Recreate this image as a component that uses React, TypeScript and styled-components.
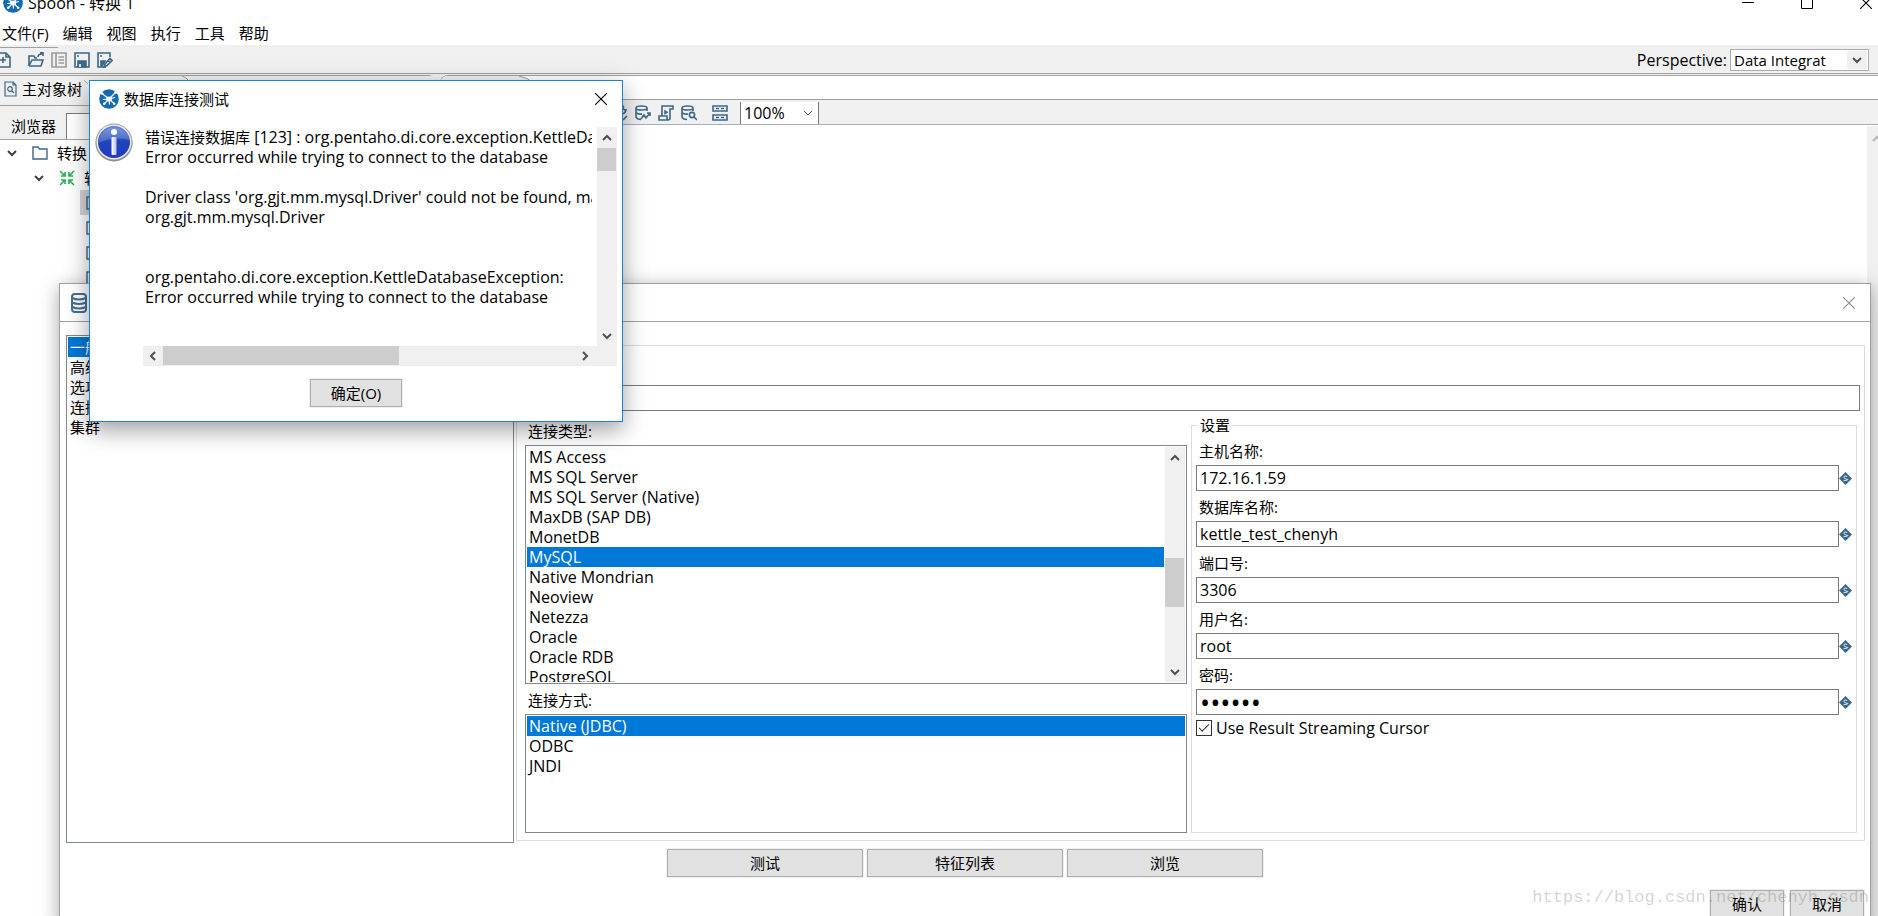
import React from "react";
import styled, { createGlobalStyle, css } from "styled-components";

const ICON = "#3d6788";
const SELECT = "#0078d7";

const Global = createGlobalStyle`
  *, *::before, *::after { box-sizing: border-box; }
  html, body { margin: 0; height: 100%; overflow: hidden; }
  body, button, input, select {
    font-family: "Open Sans", "Noto Sans CJK SC", sans-serif;
    font-size: 15px;
    line-height: 20px;
    color: #000;
  }
  ul { list-style: none; margin: 0; padding: 0; }
  svg { display: block; flex: none; }
`;

/* ---------- main window ---------- */

const Desktop = styled.div`
  position: relative;
  display: flex;
  flex-direction: column;
  height: 100vh;
  overflow: hidden;
  background: #fff;
`;

const TitleBar = styled.header`
  display: flex;
  align-items: flex-start;
  justify-content: space-between;
  height: 23px;
`;

const AppTitle = styled.h1`
  display: flex;
  align-items: center;
  gap: 5px;
  margin: -7px 0 0 3px;
  height: 20px;
  font-size: 16px;
  font-weight: 400;
`;

const WindowControls = styled.div`
  display: flex;
  gap: 47px;
  margin: -3px 6px 0 0;
`;

const PlainButton = styled.button`
  display: flex;
  align-items: center;
  justify-content: center;
  flex: none;
  padding: 0;
  border: 0;
  background: none;
`;

const MenuBar = styled.nav`
  display: flex;
  gap: 14px;
  height: 22px;
  padding: 0 0 2px 2px;
`;

const Toolbar = styled.div`
  display: flex;
  align-items: center;
  justify-content: space-between;
  height: 29px;
  padding-right: 9px;
  background: #f0f0f0;
  border-bottom: 1px solid #a0a0a0;
`;

const ToolGroup = styled.div`
  display: flex;
  align-items: center;
  gap: 7px;
  height: 28px;
  margin-left: -5px;
  padding-top: 2px;
  background: linear-gradient(#a0a0a0, #a0a0a0) 0 2px / 63px 1px no-repeat;
  & > :first-child { margin-right: 10px; }
`;

const Perspective = styled.label`
  display: flex;
  align-items: center;
  gap: 3px;
  padding-top: 1px;
  font-size: 16px;
`;

const PerspectiveBox = styled.span`
  display: flex;
  width: 139px;
  height: 22px;
  border: 1px solid #abadb3;
  background: #fff;
`;

const FlatSelect = styled.select`
  flex: 1;
  min-width: 0;
  height: 20px;
  padding: 0 0 0 3px;
  border: 0;
  background: none;
  appearance: none;
`;

const DropCell = styled.span`
  display: flex;
  align-items: center;
  justify-content: center;
  width: 20px;
  margin: 1px;
  background: #f0f0f0;
`;

const Workspace = styled.main`
  display: flex;
  flex: 1;
  min-height: 0;
  gap: 4px;
  padding-top: 1px;
  background: #f0f0f0;
`;

const SidePanel = styled.aside`
  display: flex;
  flex-direction: column;
  width: 436px;
  border-top: 1px solid #a0a0a0;
  border-right: 1px solid #a0a0a0;
  border-top-right-radius: 8px;
  background: #fff;
`;

const SideTabs = styled.div`
  display: flex;
  height: 30px;
  background: #f0f0f0;
  border-bottom: 1px solid #a0a0a0;
`;

const SideTab = styled.div`
  display: flex;
  align-items: center;
  gap: 5px;
  height: 26px;
  padding-left: 4px;
  width: 84px;
`;

const FilterRow = styled.label`
  display: flex;
  align-items: center;
  gap: 10px;
  height: 34px;
  padding: 7px 4px 0 11px;
  background: #f0f0f0;
  border-bottom: 1px solid #a0a0a0;
`;

const FilterInput = styled.input`
  flex: 1;
  min-width: 0;
  height: 26px;
  border: 1px solid #7a7a7a;
  border-bottom: 0;
`;

const TreeRow = styled.li<{ $depth: number; $selected?: boolean }>`
  display: flex;
  align-items: center;
  height: 25px;
  margin-left: ${(p) => (p.$depth === 2 ? 80 : 0)}px;
  padding-left: ${(p) => (p.$depth === 2 ? 6 : 6 + p.$depth * 27)}px;
  background: ${(p) => (p.$selected ? "#d4d4d4" : "none")};
  & > svg + svg { margin: 0 9px 0 14px; }
`;

const Editor = styled.section`
  display: flex;
  flex-direction: column;
  flex: 1;
  min-width: 0;
  border-top: 1px solid #a0a0a0;
  border-left: 1px solid #a0a0a0;
  border-top-left-radius: 8px;
  background: #fff;
`;

const EditorTabs = styled.div`
  height: 24px;
  border-bottom: 1px solid #a0a0a0;
`;

const EditorToolbar = styled.div`
  display: flex;
  align-items: center;
  gap: 7px;
  height: 25px;
  padding: 2px 0 0 171px;
  background: #f0f0f0;
  border-bottom: 1px solid #abadb3;
`;

const ZoomBox = styled.span`
  display: flex;
  align-items: center;
  width: 79px;
  height: 22px;
  margin-left: 5px;
  padding-right: 4px;
  border-left: 1px solid #7a7a7a;
  border-right: 1px solid #7a7a7a;
  background: #fff;
  & > ${FlatSelect} { font-size: 16px; }
`;

const Canvas = styled.div`
  display: flex;
  justify-content: flex-end;
  flex: 1;
  padding-top: 1px;
`;

const CanvasScroll = styled.div`
  width: 11px;
  padding: 7px 0 0 4px;
  overflow: hidden;
  background: #f0f0f0;
`;

/* ---------- shared parts ---------- */

const Track = styled.div<{ $horizontal?: boolean }>`
  display: flex;
  flex: none;
  background: #f0f0f0;
  ${(p) =>
    p.$horizontal
      ? css`height: 20px; padding-right: 2px;`
      : css`flex-direction: column; width: 20px;`}
`;

const TrackEnd = styled(PlainButton)<{ $horizontal?: boolean }>`
  width: 19px;
  height: 21px;
  ${(p) => p.$horizontal && css`width: 20px; height: 20px;`}
`;

const TrackLane = styled.div<{ $horizontal?: boolean }>`
  display: flex;
  flex: 1;
  flex-direction: ${(p) => (p.$horizontal ? "row" : "column")};
`;

const Thumb = styled.div<{ $horizontal?: boolean; $start: number; $size: number }>`
  background: #cdcdcd;
  ${(p) =>
    p.$horizontal
      ? css`width: ${p.$size}px; height: 19px; margin-left: ${p.$start}px;`
      : css`height: ${p.$size}px; width: 19px; margin-top: ${p.$start}px;`}
`;

const PushButton = styled.button<{ $width: number }>`
  flex: none;
  width: ${(p) => p.$width}px;
  height: 28px;
  padding: 0;
  border: 1px solid #adadad;
  background: #e1e1e1;
  box-shadow: 0 0 0 1px #f0f0f0;
`;

const ListBox = styled.ul`
  flex: 1;
  min-width: 0;
  padding: 1px;
  overflow: hidden;
  background: #fff;
`;

const Option = styled.li<{ $selected?: boolean }>`
  height: 20px;
  padding-left: 2px;
  white-space: nowrap;
  color: ${(p) => (p.$selected ? "#fff" : "#000")};
  background: ${(p) => (p.$selected ? SELECT : "none")};
`;

const ListFrame = styled.div<{ $height: number }>`
  display: flex;
  height: ${(p) => p.$height}px;
  padding-bottom: 1px;
  border: 1px solid #828790;
  background: #fff;
  & > ${Track} { margin: 1px 1px 0 0; }
`;

const TextBox = styled.input`
  flex: 1;
  min-width: 0;
  width: 100%;
  height: 26px;
  padding: 0 3px;
  border: 1px solid #7a7a7a;
  background: #fff;
  font-size: 16px;
  outline: 0;
  &[type="password"] { font-size: 27px; }
`;

/* ---------- database connection window ---------- */

const DatabaseWindow = styled.section`
  position: absolute;
  top: 283px;
  left: 59px;
  right: 7px;
  border: 1px solid #a0a0a0;
  background: #fff;
  box-shadow: 0 4px 18px rgba(0, 0, 0, 0.35);
`;

const DatabaseTitle = styled.header`
  display: flex;
  align-items: center;
  justify-content: space-between;
  height: 38px;
  padding: 0 15px 0 11px;
  border-bottom: 1px solid #a0a0a0;
`;

const DatabaseBody = styled.div`
  display: flex;
  gap: 2px;
  padding: 13px 5px 6px 6px;
`;

const Sections = styled.div`
  width: 448px;
  flex: none;
`;

const General = styled.div`
  flex: 1;
  min-width: 0;
  margin: 10px 0 2px;
  padding: 10px 4px 7px 8px;
  border: 1px solid #dcdcdc;
`;

const FieldLabel = styled.label`
  display: block;
  height: 20px;
  padding-left: 3px;
`;

const NameField = styled.div`
  display: grid;
  gap: 9px;
`;

const Columns = styled.div`
  display: grid;
  grid-template-columns: 331fr 333fr;
  gap: 4px;
  padding-right: 3px;
`;

const Choices = styled.div`
  display: grid;
  gap: 4px;
  align-content: start;
  padding-top: 10px;
  font-size: 16px;
  & > ${ListFrame} + div { margin-top: 2px; }
`;

const ChoiceTitle = styled.div`
  height: 20px;
  padding-left: 3px;
  font-size: 15px;
`;

const Settings = styled.fieldset`
  min-width: 0;
  margin: 4px 0 0;
  padding: 6px 4px 0;
  border: 1px solid #dcdcdc;
`;

const Legend = styled.legend`
  height: 20px;
  margin-left: 2px;
  padding: 0 2px;
`;

const SettingField = styled.div`
  display: grid;
  gap: 4px;
  margin-bottom: 6px;
`;

const VariableInput = styled.div`
  display: flex;
  align-items: center;
`;

const CheckLabel = styled.label`
  display: flex;
  align-items: center;
  gap: 4px;
  margin-top: -3px;
  font-size: 16px;
`;

const CheckBox = styled.input`
  display: grid;
  place-items: center;
  width: 16px;
  height: 16px;
  margin: 0;
  border: 1px solid #333;
  background: #fff;
  appearance: none;
  &:checked::before {
    content: "";
    width: 10px;
    height: 5px;
    margin-top: -3px;
    border-left: 1px solid #333;
    border-bottom: 1px solid #333;
    transform: rotate(-45deg);
  }
`;

const Actions = styled.div`
  display: flex;
  justify-content: center;
  gap: 4px;
`;

const Footer = styled.footer`
  display: flex;
  justify-content: flex-end;
  gap: 6px;
  padding: 13px 6px 10px;
`;

/* ---------- message dialog ---------- */

const MessageWindow = styled.section`
  position: absolute;
  top: 80px;
  left: 89px;
  width: 534px;
  padding-bottom: 14px;
  border: 1px solid #1883d7;
  background: #fff;
  box-shadow: 0 8px 22px rgba(0, 0, 0, 0.38);
`;

const MessageTitle = styled.header`
  display: flex;
  align-items: center;
  gap: 5px;
  height: 36px;
  padding: 0 15px 0 9px;
`;

const DialogName = styled.h2`
  flex: 1;
  margin: 0;
  font-size: 15px;
  font-weight: 400;
`;

const MessageBody = styled.div`
  display: flex;
  gap: 10px;
  padding: 6px 5px 13px;
`;

const MessageScroller = styled.div`
  display: grid;
  grid-template-columns: minmax(0, 1fr) 20px;
  grid-template-rows: 219px 20px;
  flex: 1;
  min-width: 0;
  margin-top: 4px;
  background: #f0f0f0;
`;

const MessageText = styled.div`
  overflow: hidden;
  padding-left: 2px;
  border-right: 5px solid #fff;
  white-space: pre;
  background: #fff;
  font-size: 16px;
`;

const MessageLine = styled.div`
  height: 20px;
`;

const Chinese = styled.span`
  font-size: 15px;
`;

const Watermark = styled.div`
  position: absolute;
  right: 9px;
  bottom: 8px;
  font-family: "Liberation Mono", monospace;
  font-size: 17px;
  color: rgba(120, 120, 105, 0.32);
  pointer-events: none;
`;

/* ---------- drawings ---------- */

const Svg = ({ w = 16, h = 16, children, ...rest }: any) => (
  <svg width={w} height={h} viewBox={`0 0 ${w} ${h}`} fill="none" stroke={ICON} strokeWidth={1.6} {...rest}>
    {children}
  </svg>
);

const Logo = () => (
  <Svg w={20} h={20} stroke="#fff" strokeWidth={1.2}>
    <circle cx="10" cy="10" r="9.8" fill="#1569b0" stroke="none" />
    <path d="M10 10 3 4.5M10 10 17 3M10 10 5.5 14.5M10 10 15 14.5M10 10 4 10.5M10 10 10.5 15.5M10 10 16 8.5" />
    <ellipse cx="10" cy="10" rx="3" ry="2.4" fill="#fff" stroke="none" />
    <circle cx="3.2" cy="4.6" r="1.3" fill="#fff" stroke="none" />
    <circle cx="16.8" cy="3.2" r="1.5" fill="#fff" stroke="none" />
    <circle cx="5.2" cy="14.8" r="1.3" fill="#fff" stroke="none" />
    <circle cx="15.2" cy="14.8" r="1.2" fill="#fff" stroke="none" />
  </Svg>
);

const Info = () => (
  <Svg w={38} h={40} stroke="none">
    <defs>
      <linearGradient id="ball" x1="0" y1="0" x2="0" y2="1">
        <stop offset="0" stopColor="#5f86dc" />
        <stop offset="0.5" stopColor="#1f45b8" />
        <stop offset="1" stopColor="#2238c8" />
      </linearGradient>
      <linearGradient id="stem" x1="0" y1="0" x2="1" y2="0">
        <stop offset="0" stopColor="#fff" />
        <stop offset="1" stopColor="#b9c2dc" />
      </linearGradient>
    </defs>
    <circle cx="19" cy="20" r="18.5" fill="#8a8a8a" />
    <circle cx="19" cy="19" r="18.5" fill="#9c9c9c" />
    <circle cx="19" cy="19" r="17.5" fill="#e8e8e8" />
    <circle cx="19" cy="19" r="16" fill="url(#ball)" />
    <path d="M3.2 20A16 16 0 0 1 34.8 17Q19 13 3.2 20Z" fill="#fff" opacity="0.18" />
    <circle cx="19" cy="9" r="3" fill="#fff" />
    <rect x="16.5" y="14" width="5" height="18" rx="1" fill="url(#stem)" />
  </Svg>
);

const paths: Record<string, string> = {
  up: "M2 8 6 4 10 8",
  down: "M2 4 6 8 10 4",
  left: "M8 2 4 6 8 10",
  right: "M4 2 8 6 4 10",
};

const Arrow = ({ dir, color = "#505050", width = 2 }: { dir: string; color?: string; width?: number }) => (
  <Svg w={12} h={12} stroke={color} strokeWidth={width}>
    <path d={paths[dir]} />
  </Svg>
);

const Cross = ({ color = "#000" }: { color?: string }) => (
  <Svg w={12} h={12} stroke={color} strokeWidth={1.1}>
    <path d="M0 0 12 12M12 0 0 12" />
  </Svg>
);

const NewFile = () => (
  <Svg><path d="M1 1H11L15 5V15H1ZM11 1V5H15M8 5V11M5 8H11" /></Svg>
);
const OpenFile = () => (
  <Svg><path d="M1 14V4H6L7 6H9M1 14H13L15 8H4L1 14M10 5Q10 2 14 2M12 0.8H15V4" /></Svg>
);
const ListDoc = () => (
  <Svg stroke="#9a9a9a"><path d="M1 1H15V15H1ZM5 1V15M7.5 5H13M7.5 8H13M7.5 11H13" /></Svg>
);
const Save = () => (
  <Svg><path d="M1 1H15V15H1Z" /><path d="M4 9H12V15H4Z" fill={ICON} /><path d="M6 12V15" stroke="#fff" /><path d="M3 4H5" /></Svg>
);
const SaveAs = () => (
  <Svg><path d="M9 15H1V1H13V5" /><path d="M4 9H8L5 14H4Z" fill={ICON} /><path d="M3 4H5M7 15 8 12 13 6.5 15 8.5 10 13.5ZM11 8.5 13 10.5" /></Svg>
);
const PageSearch = () => (
  <Svg w={13} h={16} strokeWidth={1.2}>
    <path d="M1 1H9L12 4V15H1ZM9 1V4H12" /><circle cx="6" cy="8" r="2.3" /><path d="M8 10 10 12" />
  </Svg>
);
const Folder = () => (
  <Svg strokeWidth={1.4}><path d="M1 14V2H6L7.5 4H15V14Z" /></Svg>
);
const Transform = () => (
  <Svg stroke="#22b14c">
    <path d="M1 1 6 6M6 2V6H2M15 1 10 6M10 2V6H14M1 15 6 10M2 10H6V14M15 15 10 10M14 10H10V14" />
  </Svg>
);
const Database = () => (
  <Svg w={16} h={20} stroke="#456f92" strokeWidth={2}>
    <path d="M1 4Q1 1 4 1H12Q15 1 15 4V16Q15 19 12 19H4Q1 19 1 16ZM1 5Q8 8 15 5M1 9.5Q8 12.5 15 9.5M1 14Q8 17 15 14" />
  </Svg>
);
const Check = () => (
  <Svg><path d="M12 1Q9 3 14 6M10 9Q14 8 14 4M11 15 15 11" /></Svg>
);
const Cylinder = "M1 3Q1 1 6.5 1T12 3 6.5 5 1 3V12Q2 14.5 6 14.5M1 7.5Q3 9.5 7 9M12 3V6";
const DbImpact = () => (
  <Svg><path d={Cylinder} /><path d="M6 14 9 10 11 13 15 8M12 8H15V11" /></Svg>
);
const Script = () => (
  <Svg>
    <path d="M4 11V1H15V4H12V13Q12 15 10 15H1V11H9V15" /><path d="M6.5 5V9.5L10 7.2Z" fill={ICON} strokeWidth={0.5} />
  </Svg>
);
const DbSearch = () => (
  <Svg><path d={Cylinder} /><circle cx="11" cy="10" r="2.6" /><path d="M13 12 16 15" /></Svg>
);
const Results = () => (
  <Svg><path d="M1 1H15V6H1ZM1 10H15V15H1ZM4 3.5H7M9 3.5H12M4 12.5H7M9 12.5H12" /></Svg>
);
const Variable = () => (
  <Svg w={13} h={13} stroke="none">
    <path d="M6.5 0 13 6.5 6.5 13 0 6.5Z" fill={ICON} />
    <path d="M8.3 4.3Q4.8 3.2 4.9 5.1T8.1 7.4 4.6 8.8" stroke="#dce6ee" strokeWidth="1" />
  </Svg>
);

/* ---------- data ---------- */

const menus = ["文件(F)", "编辑", "视图", "执行", "工具", "帮助"];
const sections = ["一般", "高级", "选项", "连接池", "集群"];
const databases = [
  "MS Access", "MS SQL Server", "MS SQL Server (Native)", "MaxDB (SAP DB)", "MonetDB", "MySQL",
  "Native Mondrian", "Neoview", "Netezza", "Oracle", "Oracle RDB", "PostgreSQL",
];
const accessModes = ["Native (JDBC)", "ODBC", "JNDI"];
const settings = [
  { id: "host", label: "主机名称:", value: "172.16.1.59" },
  { id: "database", label: "数据库名称:", value: "kettle_test_chenyh" },
  { id: "port", label: "端口号:", value: "3306" },
  { id: "user", label: "用户名:", value: "root" },
  { id: "password", label: "密码:", value: "secret", type: "password" },
];
const message = [
  "Error occurred while trying to connect to the database",
  "",
  "Driver class 'org.gjt.mm.mysql.Driver' could not be found, make",
  "org.gjt.mm.mysql.Driver",
  "",
  "",
  "org.pentaho.di.core.exception.KettleDatabaseException:",
  "Error occurred while trying to connect to the database",
];

const Scrollbar = ({ horizontal, start, size }: { horizontal?: boolean; start: number; size: number }) => (
  <Track $horizontal={horizontal}>
    <TrackEnd $horizontal={horizontal} aria-label="Scroll back"><Arrow dir={horizontal ? "left" : "up"} /></TrackEnd>
    <TrackLane $horizontal={horizontal}>
      <Thumb $horizontal={horizontal} $start={start} $size={size} />
    </TrackLane>
    <TrackEnd $horizontal={horizontal} aria-label="Scroll forward"><Arrow dir={horizontal ? "right" : "down"} /></TrackEnd>
  </Track>
);

const List = ({ label, items, selected }: { label: string; items: string[]; selected: string }) => (
  <ListBox role="listbox" aria-label={label}>
    {items.map((item) => (
      <Option key={item} role="option" aria-selected={item === selected} $selected={item === selected}>
        {item}
      </Option>
    ))}
  </ListBox>
);

const ResultsButton = styled(PlainButton)`
  margin-left: 8px;
`;

export default function App() {
  return (
    <Desktop>
      <Global />
      <TitleBar>
        <AppTitle><Logo />Spoon - 转换 1</AppTitle>
        <WindowControls>
          <PlainButton aria-label="Minimize">
            <Svg w={12} h={12} stroke="#000" strokeWidth={1}><path d="M0 5.5H12" /></Svg>
          </PlainButton>
          <PlainButton aria-label="Maximize">
            <Svg w={12} h={12} stroke="#000" strokeWidth={1}><path d="M0.5 0.5H11.5V11.5H0.5Z" /></Svg>
          </PlainButton>
          <PlainButton aria-label="Close"><Cross /></PlainButton>
        </WindowControls>
      </TitleBar>
      <MenuBar>{menus.map((m) => <PlainButton key={m}>{m}</PlainButton>)}</MenuBar>
      <Toolbar>
        <ToolGroup>
          <PlainButton aria-label="New"><NewFile /></PlainButton>
          <PlainButton aria-label="Open"><OpenFile /></PlainButton>
          <PlainButton aria-label="Explore"><ListDoc /></PlainButton>
          <PlainButton aria-label="Save"><Save /></PlainButton>
          <PlainButton aria-label="Save as"><SaveAs /></PlainButton>
        </ToolGroup>
        <Perspective>
          Perspective:
          <PerspectiveBox>
            <FlatSelect defaultValue="di"><option value="di">Data Integrat</option></FlatSelect>
            <DropCell><Arrow dir="down" /></DropCell>
          </PerspectiveBox>
        </Perspective>
      </Toolbar>

      <Workspace>
        <SidePanel>
          <SideTabs>
            <SideTab><PageSearch />主对象树</SideTab>
            <Svg w={110} h={20} stroke="#a0a0a0" strokeWidth={1}>
              <path d="M-8 0Q-2 1 4 8M98 0Q102 1 106 6" />
            </Svg>
          </SideTabs>
          <FilterRow>浏览器<FilterInput type="text" /></FilterRow>
          <ul>
            <TreeRow $depth={0}><Arrow dir="down" color="#404040" /><Folder />转换</TreeRow>
            <TreeRow $depth={1}><Arrow dir="down" color="#404040" /><Transform />转换 1</TreeRow>
            {[0, 1, 2, 3].map((n) => (
              <TreeRow key={n} $depth={2} $selected={n === 0}><Folder /></TreeRow>
            ))}
          </ul>
        </SidePanel>
        <Editor>
          <EditorTabs>
            <Svg w={110} h={22} stroke="#a0a0a0" strokeWidth={1}>
              <path d="M0 22V4Q2 0 6 0H78Q86 1 94 8L106 22Z" fill="#f0f0f0" stroke="none" />
              <path d="M78 0Q86 1 94 8L106 22" />
            </Svg>
          </EditorTabs>
          <EditorToolbar>
            <PlainButton aria-label="Check"><Check /></PlainButton>
            <PlainButton aria-label="Impact"><DbImpact /></PlainButton>
            <PlainButton aria-label="SQL"><Script /></PlainButton>
            <PlainButton aria-label="Explore database"><DbSearch /></PlainButton>
            <ResultsButton aria-label="Show results"><Results /></ResultsButton>
            <ZoomBox>
              <FlatSelect aria-label="Zoom" defaultValue="100"><option value="100">100%</option></FlatSelect>
              <Arrow dir="down" width={1} />
            </ZoomBox>
          </EditorToolbar>
          <Canvas>
            <CanvasScroll><Arrow dir="up" color="#b8b8b8" /></CanvasScroll>
          </Canvas>
        </Editor>
      </Workspace>

      <DatabaseWindow>
        <DatabaseTitle>
          <Database />
          <PlainButton aria-label="Close"><Cross color="#8c8c8c" /></PlainButton>
        </DatabaseTitle>
        <DatabaseBody>
          <Sections>
            <ListFrame $height={508}><List label="Sections" items={sections} selected="一般" /></ListFrame>
          </Sections>
          <General>
            <NameField>
              <FieldLabel htmlFor="name">连接名称:</FieldLabel>
              <TextBox id="name" defaultValue="123" />
            </NameField>
            <Columns>
              <Choices>
                <ChoiceTitle>连接类型:</ChoiceTitle>
                <ListFrame $height={239}>
                  <List label="连接类型" items={databases} selected="MySQL" />
                  <Scrollbar start={90} size={49} />
                </ListFrame>
                <ChoiceTitle>连接方式:</ChoiceTitle>
                <ListFrame $height={119}>
                  <List label="连接方式" items={accessModes} selected="Native (JDBC)" />
                </ListFrame>
              </Choices>
              <Settings>
                <Legend>设置</Legend>
                {settings.map((s) => (
                  <SettingField key={s.id}>
                    <FieldLabel htmlFor={s.id}>{s.label}</FieldLabel>
                    <VariableInput>
                      <TextBox id={s.id} type={s.type ?? "text"} defaultValue={s.value} />
                      <Variable />
                    </VariableInput>
                  </SettingField>
                ))}
                <CheckLabel><CheckBox type="checkbox" defaultChecked />Use Result Streaming Cursor</CheckLabel>
              </Settings>
            </Columns>
          </General>
        </DatabaseBody>
        <Actions>
          <PushButton $width={196}>测试</PushButton>
          <PushButton $width={196}>特征列表</PushButton>
          <PushButton $width={196}>浏览</PushButton>
        </Actions>
        <Footer>
          <PushButton $width={74}>确认</PushButton>
          <PushButton $width={74}>取消</PushButton>
        </Footer>
      </DatabaseWindow>

      <MessageWindow role="dialog" aria-label="数据库连接测试">
        <MessageTitle>
          <Logo />
          <DialogName>数据库连接测试</DialogName>
          <PlainButton aria-label="Close"><Cross /></PlainButton>
        </MessageTitle>
        <MessageBody>
          <Info />
          <MessageScroller>
            <MessageText>
              <MessageLine>
                <Chinese>错误连接数据库</Chinese> [123] : org.pentaho.di.core.exception.KettleDatabaseException:
              </MessageLine>
              {message.map((line, i) => <MessageLine key={i}>{line}</MessageLine>)}
            </MessageText>
            <Scrollbar start={0} size={23} />
            <Scrollbar horizontal start={0} size={236} />
          </MessageScroller>
        </MessageBody>
        <Actions><PushButton $width={92}>确定(O)</PushButton></Actions>
      </MessageWindow>

      <Watermark>https://blog.csdn.net/chenyh_csdn</Watermark>
    </Desktop>
  );
}
